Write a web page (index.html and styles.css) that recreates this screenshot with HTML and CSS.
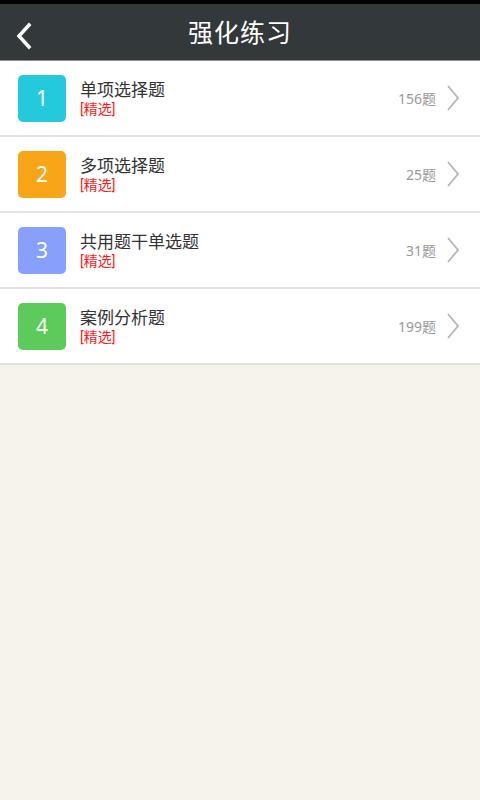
FILE: index.html
```html
<html>
<head>
    <meta charset="UTF-8">
    <title>强化练习</title>
    <link rel="stylesheet" href="styles.css">
</head>
<body>
    <div class="statusbar"></div>
    <div class="header">
        <svg class="back" width="20" height="28" viewBox="0 0 20 28">
            <path d="M15 3 L5 14 L15 25" fill="none" stroke="#fff" stroke-width="3.5" stroke-linecap="square"/>
        </svg>
        <div class="title">强化练习</div>
    </div>

    <div class="list">
        <div class="row">
            <div class="badge cyan">1</div>
            <div class="info">
                <div class="name">单项选择题</div>
                <div class="tag">[精选]</div>
            </div>
            <div class="count">156题</div>
            <svg class="arrow" width="14" height="26" viewBox="0 0 14 26"><path d="M2 1 L12 13 L2 25" fill="none" stroke="#b5b5b5" stroke-width="1.8"/></svg>
        </div>
        <div class="row">
            <div class="badge orange">2</div>
            <div class="info">
                <div class="name">多项选择题</div>
                <div class="tag">[精选]</div>
            </div>
            <div class="count">25题</div>
            <svg class="arrow" width="14" height="26" viewBox="0 0 14 26"><path d="M2 1 L12 13 L2 25" fill="none" stroke="#b5b5b5" stroke-width="1.8"/></svg>
        </div>
        <div class="row">
            <div class="badge blue">3</div>
            <div class="info">
                <div class="name">共用题干单选题</div>
                <div class="tag">[精选]</div>
            </div>
            <div class="count">31题</div>
            <svg class="arrow" width="14" height="26" viewBox="0 0 14 26"><path d="M2 1 L12 13 L2 25" fill="none" stroke="#b5b5b5" stroke-width="1.8"/></svg>
        </div>
        <div class="row">
            <div class="badge green">4</div>
            <div class="info">
                <div class="name">案例分析题</div>
                <div class="tag">[精选]</div>
            </div>
            <div class="count">199题</div>
            <svg class="arrow" width="14" height="26" viewBox="0 0 14 26"><path d="M2 1 L12 13 L2 25" fill="none" stroke="#b5b5b5" stroke-width="1.8"/></svg>
        </div>
    </div>
</body>
</html>
```

FILE: styles.css
```css
body {
    margin: 0;
    min-height: 800px;
    background-color: #f6f3ec;
    font-family: "Noto Sans", "Noto Sans CJK SC", sans-serif;
}

.statusbar {
    height: 4px;
    background-color: #000;
}

.header {
    height: 56px;
    background-color: #33383b;
    border-bottom: 1px solid #8c8f91;
    display: flex;
    align-items: center;
    justify-content: center;
    position: relative;
}

.back {
    position: absolute;
    left: 14px;
    top: 18px;
}

.title {
    color: #fff;
    font-size: 25px;
    letter-spacing: 1px;
    line-height: 30px;
}

.list {
    background-color: #fff;
}

.row {
    display: flex;
    align-items: center;
    height: 74px;
    padding: 0 20px 0 18px;
    border-bottom: 2px solid #e2e2e2;
}

.badge {
    width: 48px;
    height: 47px;
    border-radius: 5px;
    color: #fff;
    font-size: 21px;
    display: flex;
    align-items: center;
    justify-content: center;
}

.cyan { background-color: #25c9dc; }
.orange { background-color: #f9a518; }
.blue { background-color: #87a0fb; }
.green { background-color: #5ccb5c; }

.info {
    flex: 1;
    margin-left: 14px;
    padding-top: 1px;
    font-family: Roboto, "Noto Sans CJK SC", sans-serif;
}

.name {
    font-size: 17px;
    color: #333;
    line-height: 20px;
}

.tag {
    font-size: 14px;
    color: #ff1a1a;
    line-height: 18px;
}

.count {
    font-size: 14px;
    color: #999;
    margin-right: 10px;
}

.arrow {
    display: block;
}
```
